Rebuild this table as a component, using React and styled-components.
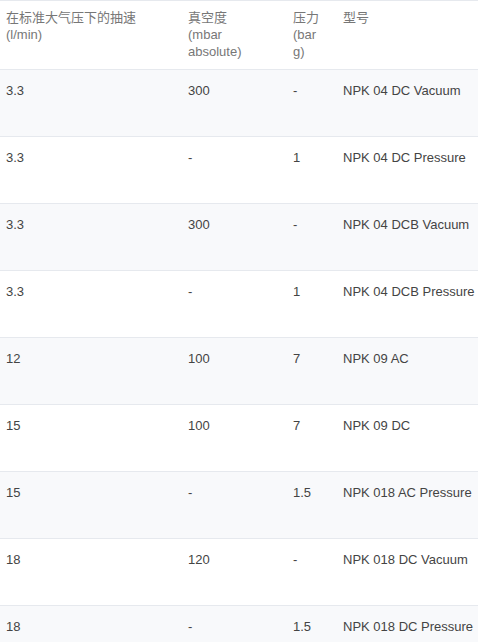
import React from 'react';
import styled, { createGlobalStyle } from 'styled-components';

const GlobalStyle = createGlobalStyle`
  body {
    margin: 0;
    background: #fff;
    font-family: 'Liberation Sans', Arial, 'Noto Sans CJK SC', sans-serif;
  }
`;

const Table = styled.table`
  width: 478px;
  table-layout: fixed;
  border-collapse: collapse;
  font-size: 13px;
  line-height: 17px;
  color: #444;
  th,
  td {
    padding: 0 0 0 6px;
    text-align: left;
    vertical-align: top;
    border-top: 1px solid #e6e9ee;
  }
`;

const Col = styled.col`
  width: ${p => p.$w}px;
`;

const HeadCell = styled.th`
  height: 60px;
  padding-top: 8px !important;
  font-weight: normal;
  color: #777;
`;

const Row = styled.tr`
  background: ${p => (p.$striped ? '#f8f9fb' : '#fff')};
  td {
    height: 54px;
    padding-top: 12px;
  }
`;

const widths = [182, 105, 50, 141];

const rows = [
  ['3.3', '300', '-', 'NPK 04 DC Vacuum'],
  ['3.3', '-', '1', 'NPK 04 DC Pressure'],
  ['3.3', '300', '-', 'NPK 04 DCB Vacuum'],
  ['3.3', '-', '1', 'NPK 04 DCB Pressure'],
  ['12', '100', '7', 'NPK 09 AC'],
  ['15', '100', '7', 'NPK 09 DC'],
  ['15', '-', '1.5', 'NPK 018 AC Pressure'],
  ['18', '120', '-', 'NPK 018 DC Vacuum'],
  ['18', '-', '1.5', 'NPK 018 DC Pressure'],
];

export default function App() {
  return (
    <>
      <GlobalStyle />
      <Table>
        <colgroup>
          {widths.map((w, i) => (
            <Col key={i} $w={w} />
          ))}
        </colgroup>
        <thead>
          <tr>
            <HeadCell>
              在标准大气压下的抽速
              <br />
              (l/min)
            </HeadCell>
            <HeadCell>
              真空度
              <br />
              (mbar
              <br />
              absolute)
            </HeadCell>
            <HeadCell>
              压力
              <br />
              (bar
              <br />
              g)
            </HeadCell>
            <HeadCell>型号</HeadCell>
          </tr>
        </thead>
        <tbody>
          {rows.map((r, i) => (
            <Row key={i} $striped={i % 2 === 0}>
              {r.map((c, j) => (
                <td key={j}>{c}</td>
              ))}
            </Row>
          ))}
        </tbody>
      </Table>
    </>
  );
}
